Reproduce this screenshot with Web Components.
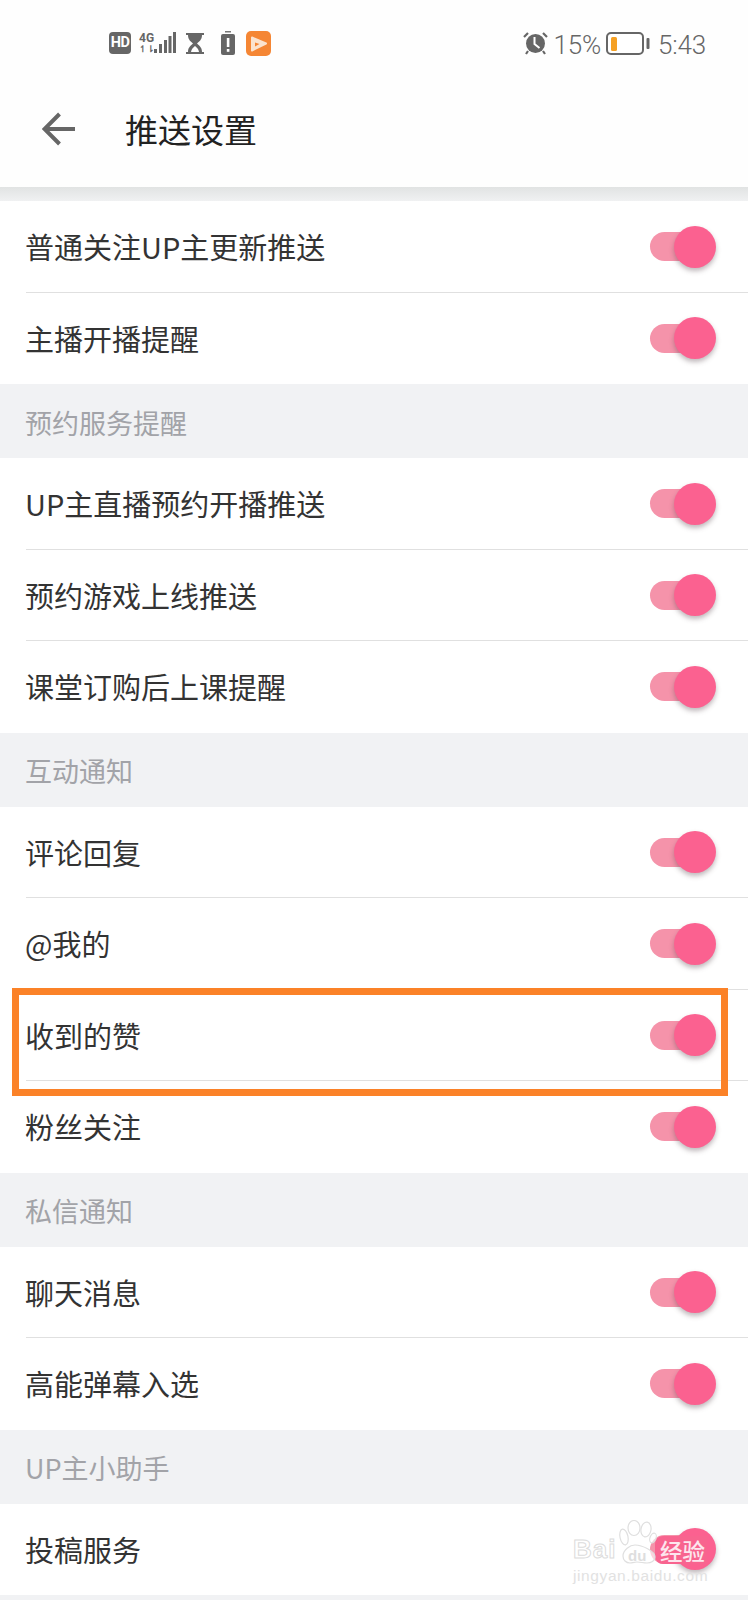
<!DOCTYPE html>
<html lang="zh">
<head>
<meta charset="utf-8">
<title>推送设置</title>
<style>
  html, body { margin: 0; padding: 0; background: #fff; }
  body { width: 748px; height: 1600px; overflow: hidden; font-family: "Noto Sans CJK SC", "Noto Sans", sans-serif; }
  push-settings-page { background: #f1f2f4; }
</style>
</head>
<body>
<push-settings-page>
  <status-bar></status-bar>
  <nav-header>推送设置</nav-header>
  <setting-row>普通关注UP主更新推送</setting-row>
  <setting-row last>主播开播提醒</setting-row>
  <section-title>预约服务提醒</section-title>
  <setting-row>UP主直播预约开播推送</setting-row>
  <setting-row>预约游戏上线推送</setting-row>
  <setting-row last>课堂订购后上课提醒</setting-row>
  <section-title>互动通知</section-title>
  <setting-row>评论回复</setting-row>
  <setting-row>@我的</setting-row>
  <setting-row highlight>收到的赞</setting-row>
  <setting-row last>粉丝关注</setting-row>
  <section-title>私信通知</section-title>
  <setting-row>聊天消息</setting-row>
  <setting-row last>高能弹幕入选</setting-row>
  <section-title>UP主小助手</section-title>
  <setting-row last>投稿服务<baidu-mark slot="over"></baidu-mark></setting-row>
</push-settings-page>

<script>
class PushSettingsPage extends HTMLElement {
    constructor() {
        super();
        this.attachShadow({mode: 'open'}).innerHTML = `
        <style>
        :host { display: block; width: 748px; height: 1600px; overflow: hidden; }
        </style>
        <slot></slot>`;
    }
}

class StatusBar extends HTMLElement {
    constructor() {
        super();
        this.attachShadow({mode: 'open'}).innerHTML = `
        <style>
        :host {
            display: flex;
            justify-content: space-between;
            align-items: center;
            height: 86px;
            padding: 0 42px 0 109px;
            box-sizing: border-box;
            background: #fefefe;
            color: #666;
            font-family: "Roboto", "Noto Sans", sans-serif;
        }
        .left, .right { display: flex; align-items: center; }
        .hd {
            width: 22px; height: 22px;
            border-radius: 4px;
            background: #666;
            color: #fff;
            font: 700 14.500px/22px "Roboto", sans-serif;
            letter-spacing: -.5px;
            text-align: center;
            margin-right: 8px;
        }
        .net {
            display: flex; flex-direction: column;
            width: 14px;
            margin-right: 1px;
            color: #666;
            font: 700 12px/12px "Roboto", sans-serif;
        }
        .net span:last-child { font-size: 9px; line-height: 10px; }
        svg { display: block; flex: none; }
        .txt { font-size: 26px; font-weight: 300; line-height: 30px; letter-spacing: -.2px; position: relative; top: 2px; }
        </style>
        <div class="left">
            <div class="hd">HD</div>
            <div class="net"><span>4G</span><span>↿⇂</span></div>
            <svg width="23" height="22" viewBox="0 0 23 22" style="margin-right:9px"><g fill="#666">
                <rect x="0" y="17" width="3" height="4"/><rect x="5" y="12" width="3" height="9"/><rect x="10" y="8" width="3" height="13"/><rect x="14.5" y="4" width="3" height="17"/><rect x="19" y="0" width="3" height="21"/></g></svg>
            <svg width="18" height="23" viewBox="0 0 18 23" style="margin-right:17px">
                <path d="M0 1h18v2h-2c0 5-3 6.500-5 8.500 2 2 5 3.500 5 8.500h2v2H0v-2h2c0-5 3-6.500 5-8.500C5 9.500 2 8 2 3H0z" fill="#666"/>
                <path d="M9 14c-2 1.500-3.500 3-4 6h8c-.5-3-2-4.500-4-6z" fill="#fff"/></svg>
            <svg width="14" height="24" viewBox="0 0 14 24" style="margin-right:11px">
                <rect x="4" y="0" width="6" height="1.500" fill="#777"/>
                <rect x="0" y="3" width="14" height="21" rx="2" fill="#666"/>
                <rect x="5.800" y="7" width="2.600" height="9" fill="#fff"/><rect x="5.800" y="18" width="2.600" height="2.800" fill="#fff"/></svg>
            <svg width="25" height="25" viewBox="0 0 25 25">
                <rect width="25" height="25" rx="5" fill="#f58634"/>
                <path d="M6 6.500 20 12.500 6 19.500z" fill="#fbe3cf" stroke="#fbe3cf" stroke-width="2" stroke-linejoin="round"/>
                <path d="M9 11.500l4.500 1.500-4.500 2.500z" fill="#f58634"/></svg>
        </div>
        <div class="right">
            <svg width="25" height="24" viewBox="0 0 25 24" style="margin-right:6px">
                <circle cx="12.500" cy="12.500" r="9.500" fill="#666"/>
                <path d="M1 6 5 2M24 6 20 2M5 20l-2 3M20 20l2 3" stroke="#666" stroke-width="2.200" fill="none"/>
                <path d="M11.500 6v7l5 4" stroke="#fff" stroke-width="2" fill="none"/></svg>
            <span class="txt" style="margin-right:5px">15%</span>
            <svg width="44" height="23" viewBox="0 0 44 23" style="margin-right:8px">
                <rect x="1" y="1" width="36" height="21" rx="4" fill="#fff" stroke="#666" stroke-width="2"/>
                <rect x="5" y="5" width="6" height="14" rx="1.500" fill="#f5a023"/>
                <rect x="40.500" y="6" width="3" height="11" rx="1" fill="#666"/></svg>
            <span class="txt">5:43</span>
        </div>`;
    }
}

class NavHeader extends HTMLElement {
    constructor() {
        super();
        this.attachShadow({mode: 'open'}).innerHTML = `
        <style>
        :host { display: block; }
        .bar {
            display: flex;
            align-items: center;
            height: 101px;
            padding: 0 0 15px 42px;
            box-sizing: border-box;
            background: #fefefe;
            color: #222;
        }
        svg { display: block; margin-right: 50px; }
        .title { font-size: 33px; line-height: 44px; }
        .shade { height: 14px; background: linear-gradient(#e1e3e3, #f0f1f2); }
        </style>
        <div class="bar">
            <svg width="33" height="34" viewBox="0 0 33 34"><path d="M33 17H3M17.500 2 2.500 17l15 15" fill="none" stroke="#666" stroke-width="4"/></svg>
            <div class="title"><slot></slot></div>
        </div>
        <div class="shade"></div>`;
    }
}

class SectionTitle extends HTMLElement {
    constructor() {
        super();
        this.attachShadow({mode: 'open'}).innerHTML = `
        <style>
        :host {
            display: flex;
            align-items: center;
            height: 74px;
            padding: 2px 0 0 25px;
            box-sizing: border-box;
            background: #f1f2f4;
            color: #a2a3a8;
            font-size: 27px;
        }
        </style>
        <slot></slot>`;
    }
}

class ToggleSwitch extends HTMLElement {
    constructor() {
        super();
        this.attachShadow({mode: 'open'}).innerHTML = `
        <style>
        :host { display: block; position: relative; width: 66px; height: 42px; flex: none; margin-top: 1px; }
        .track {
            position: absolute; left: 0; top: 6.500px;
            width: 56px; height: 29px;
            border-radius: 15px;
            background: #f593aa;
        }
        .knob {
            position: absolute; right: 0; top: 0;
            width: 42px; height: 42px;
            border-radius: 50%;
            background: #fb6190;
            box-shadow: 0 3px 5px rgba(90, 70, 80, .38);
        }
        </style>
        <div class="track"></div>
        <div class="knob"></div>`;
    }
}

class SettingRow extends HTMLElement {
    constructor() {
        super();
        this.attachShadow({mode: 'open'}).innerHTML = `
        <style>
        :host { display: block; position: relative; background: #fff; color: #333; font-size: 29px; }
        .inner {
            display: flex;
            justify-content: space-between;
            align-items: center;
            height: 91.500px;
            margin-left: 26px;
            padding-right: 32px;
            box-sizing: border-box;
            border-bottom: 1px solid #e0e0e0;
        }
        .inner span { margin-left: -1px; }
        :host([last]) .inner { border-bottom-color: transparent; }
        .box { display: none; }
        :host([highlight]) .box {
            display: block;
            position: absolute;
            left: 12px; top: -2px;
            width: 716px; height: 108px;
            box-sizing: border-box;
            border: 7px solid #fb8228;
            z-index: 2;
            pointer-events: none;
        }
        </style>
        <div class="inner">
            <span><slot></slot></span>
            <toggle-switch></toggle-switch>
        </div>
        <div class="box"></div>
        <slot name="over"></slot>`;
    }
}

class BaiduMark extends HTMLElement {
    constructor() {
        super();
        this.attachShadow({mode: 'open'}).innerHTML = `
        <style>
        :host {
            display: block;
            position: absolute;
            left: 572px; top: 16px;
            width: 146px; height: 72px;
            font-family: "Liberation Sans", sans-serif;
        }
        .paw { position: absolute; left: 46px; top: 0; }
        .bai {
            position: absolute; left: 1px; top: 13px;
            font: 700 26px/32px "Liberation Sans", sans-serif;
            letter-spacing: 1px;
            color: #fff;
            -webkit-text-stroke: 1px #dcdcdc;
        }
        .du {
            position: absolute; left: 56px; top: 27px;
            font: 700 15px/18px "Liberation Sans", sans-serif;
            color: #dedede;
        }
        .site {
            position: absolute; left: 1px; top: 47px;
            font: 400 15.500px/18px "Liberation Sans", sans-serif;
            letter-spacing: .6px;
            color: #e2e2e2;
        }
        .badge {
            position: absolute; left: 83px; top: 16px;
            width: 52px; height: 28px;
            border-radius: 8px 0 0 8px;
            background: #f8648f;
        }
        .jy {
            position: absolute; left: 88px; top: 15px;
            font: 500 22.500px/30px "Noto Sans CJK SC", sans-serif;
            color: #fde6ee;
        }
        </style>
        <div class="badge"></div>
        <svg class="paw" width="40" height="44" viewBox="0 0 40 44" fill="rgba(255,255,255,.6)" stroke="#dfdfdf" stroke-width="1.200">
            <ellipse cx="6" cy="17" rx="4" ry="8" transform="rotate(-12 6 17)"/>
            <ellipse cx="16" cy="8" rx="6" ry="7.500"/>
            <ellipse cx="28" cy="9.500" rx="5" ry="7.500" transform="rotate(10 28 9.500)"/>
            <ellipse cx="35" cy="18" rx="3" ry="5" transform="rotate(20 35 18)"/>
            <path d="M5 36c0-6 7-11 12-11 7 0 20 6 20 12 0 4-4 6-8 6-4 0-6-1-10-1-3 0-5 1-7 1-4 0-7-3-7-7z"/>
        </svg>
        <div class="bai">Bai</div>
        <div class="du">du</div>
        <div class="site">jingyan.baidu.com</div>
        <div class="jy">经验</div>`;
    }
}

customElements.define('push-settings-page', PushSettingsPage);
customElements.define('status-bar', StatusBar);
customElements.define('nav-header', NavHeader);
customElements.define('section-title', SectionTitle);
customElements.define('toggle-switch', ToggleSwitch);
customElements.define('setting-row', SettingRow);
customElements.define('baidu-mark', BaiduMark);
</script>
</body>
</html>
